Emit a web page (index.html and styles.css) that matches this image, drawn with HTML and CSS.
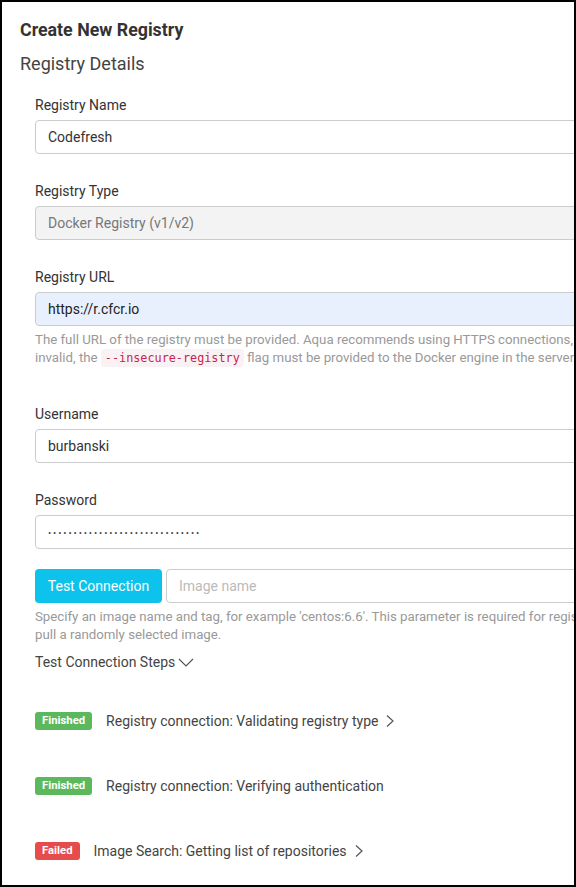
FILE: index.html
```html
<!DOCTYPE html>
<html>
<head>
<meta charset="utf-8">
<link rel="stylesheet" href="styles.css">
</head>
<body>
<div class="frame">
  <h1 class="title">Create New Registry</h1>
  <h2 class="subtitle">Registry Details</h2>
  <div class="form">
    <div class="field">
      <label class="label">Registry Name</label>
      <input class="input" type="text" value="Codefresh">
    </div>
    <div class="field">
      <label class="label">Registry Type</label>
      <input class="input input-disabled" type="text" value="Docker Registry (v1/v2)" disabled>
    </div>
    <div class="field field-help">
      <label class="label">Registry URL</label>
      <input class="input input-autofill" type="text" value="https://r.cfcr.io">
      <p class="help">The full URL of the registry must be provided. Aqua recommends using HTTPS connections, but if the certificate is<br>invalid, the <code class="code">--insecure-registry</code> flag must be provided to the Docker engine in the server.</p>
    </div>
    <div class="field">
      <label class="label">Username</label>
      <input class="input" type="text" value="burbanski">
    </div>
    <div class="field field-last">
      <label class="label">Password</label>
      <input class="input input-pass" type="password" value="000000000000000000000000000000">
    </div>
    <div class="test-row">
      <button class="btn">Test Connection</button>
      <input class="input input-image" type="text" placeholder="Image name">
    </div>
    <p class="help help-test">Specify an image name and tag, for example 'centos:6.6'. This parameter is required for registries that do not support search; otherwise we will<br>pull a randomly selected image.</p>
    <div class="steps-toggle">Test Connection Steps
      <svg class="chev-down" width="16" height="9" viewBox="0 0 16 9"><path d="M1 1 L8 8 L15 1" fill="none" stroke="#555" stroke-width="1.2"/></svg>
    </div>
    <div class="steps">
      <div class="step">
        <span class="badge badge-ok">Finished</span>
        <span class="step-text">Registry connection: Validating registry type</span>
        <svg class="chev-right" width="8" height="12" viewBox="0 0 8 12"><path d="M1 0.5 L7 6 L1 11.5" fill="none" stroke="#555" stroke-width="1.2"/></svg>
      </div>
      <div class="step">
        <span class="badge badge-ok">Finished</span>
        <span class="step-text">Registry connection: Verifying authentication</span>
      </div>
      <div class="step">
        <span class="badge badge-fail">Failed</span>
        <span class="step-text">Image Search: Getting list of repositories</span>
        <svg class="chev-right" width="8" height="12" viewBox="0 0 8 12"><path d="M1 0.5 L7 6 L1 11.5" fill="none" stroke="#555" stroke-width="1.2"/></svg>
      </div>
    </div>
  </div>
</div>
</body>
</html>
```

FILE: styles.css
```css
* { box-sizing: border-box; }
html, body { margin: 0; padding: 0; background: #fff; }
body { font-family: Roboto, "Liberation Sans", sans-serif; color: #333; }

.frame {
  width: 576px;
  height: 887px;
  border: 2px solid #000;
  overflow: hidden;
  padding: 16px 0 0 18px;
  background: #fff;
}

.title {
  margin: 0;
  font-size: 17.8px;
  line-height: 24px;
  font-weight: 700;
  color: #333;
}

.subtitle {
  margin: 10px 0 0;
  font-size: 18px;
  line-height: 24px;
  font-weight: 400;
  color: #444;
}

.form {
  width: 640px;
  margin: 19px 0 0 15px;
}

.field { margin-bottom: 27px; }
.field-help { margin-bottom: 37px; }
.field-last { margin-bottom: 20px; }

.label {
  display: block;
  font-size: 14px;
  line-height: 20px;
  color: #333;
  margin-bottom: 5px;
}

.input {
  display: block;
  width: 100%;
  height: 34px;
  border: 1px solid #ccc;
  border-radius: 4px;
  padding: 0 12px;
  font-family: Roboto, "Liberation Sans", sans-serif;
  font-size: 14px;
  color: #333;
  background: #fff;
  outline: none;
}
.input-disabled { background: #f3f3f3; color: #777; }
.input-autofill { background: #e8f0fe; color: #222; }
.input-pass { font-size: 9.5px; letter-spacing: 1.9px; color: #444; }
.input::placeholder { color: #bbb; }

.help {
  margin: 5px 0 0;
  font-size: 13.25px;
  line-height: 18px;
  color: #999;
  white-space: nowrap;
}

.code {
  font-family: "DejaVu Sans Mono", "Liberation Mono", monospace;
  font-size: 11.8px;
  color: #c7254e;
  background: #f9f2f4;
  padding: 2px 4px;
  border-radius: 4px;
}

.test-row {
  display: flex;
  gap: 4px;
}
.btn {
  flex: none;
  width: 127px;
  height: 34px;
  border: none;
  border-radius: 4px;
  background: #0dc3ec;
  color: #fff;
  font-family: Roboto, "Liberation Sans", sans-serif;
  font-size: 14px;
  padding: 0;
}
.input-image { flex: 1; }

.steps-toggle {
  margin-top: 8px;
  font-size: 14px;
  line-height: 20px;
  color: #444;
  display: flex;
  align-items: center;
  gap: 3px;
}
.chev-down { margin-top: 1px; }

.steps { margin-top: 16px; }
.step {
  height: 65px;
  display: flex;
  align-items: center;
}
.badge {
  height: 18px;
  line-height: 18px;
  padding: 0 7px;
  border-radius: 3px;
  font-size: 11.3px;
  font-weight: 700;
  color: #fff;
}
.badge-ok { background: #5cb85c; }
.badge-fail { background: #e74c4c; }

.step-text {
  margin-left: 14px;
  font-size: 14px;
  line-height: 20px;
  color: #444;
}
.chev-right { margin-left: 8px; }
```
